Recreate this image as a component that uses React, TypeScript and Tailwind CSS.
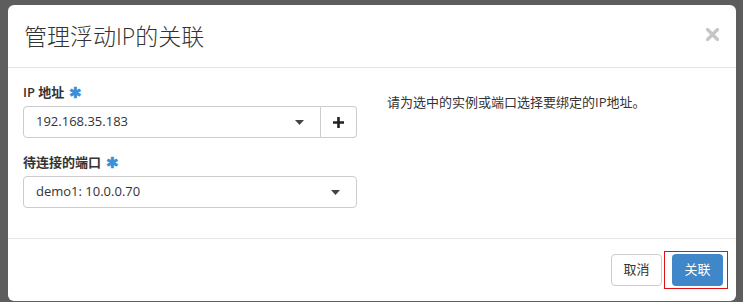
import React from 'react';

const font = { fontFamily: '"Open Sans", "Noto Sans CJK SC", sans-serif' };

const Caret: React.FC = () => (
  <svg width="9" height="5" viewBox="0 0 9 5" className="text-[#444]">
    <path d="M0 0 L9 0 L4.5 5 Z" fill="currentColor" />
  </svg>
);

const Star: React.FC = () => (
  <span className="ml-[5px] text-[#3d8fd6] text-[15px] leading-none align-[-1px]">✱</span>
);

const App: React.FC = () => {
  return (
    <div className="w-[743px] h-[302px] bg-[#5d5d5d] overflow-hidden pt-[5px] pl-[8px]" style={font}>
      <div className="w-[728px] bg-white rounded-[6px] text-[#333]">
        {/* header */}
        <div className="flex items-start justify-between h-[63px] px-[16px] pt-[15px] border-b border-[#e5e5e5]">
          <h4 className="text-[23px] leading-[32px] text-[#333] font-light">管理浮动IP的关联</h4>
          <svg width="13" height="13" viewBox="0 0 13 13" className="mt-[8px] mr-[1px]">
            <path d="M1.5 1.5 L11.5 11.5 M11.5 1.5 L1.5 11.5" stroke="#c6c6c6" strokeWidth="3.2" strokeLinecap="round" />
          </svg>
        </div>

        {/* body */}
        <div className="px-[15px] pt-[15px] pb-[15px] flex">
          <div className="w-[334px]">
            <label className="block text-[13px] leading-[18px] font-semibold text-[#333] mb-[5px]">
              IP 地址<Star />
            </label>
            <div className="flex h-[32px]">
              <div className="flex-1 flex items-center justify-between border border-[#ccc] rounded-l-[4px] pl-[12px] pr-[16px] text-[13px]">
                <span>192.168.35.183</span>
                <Caret />
              </div>
              <div className="w-[36px] flex items-center justify-center border border-l-0 border-[#ccc] rounded-r-[4px]">
                <svg width="11" height="11" viewBox="0 0 11 11">
                  <path d="M4.2 0h2.6v4.2H11v2.6H6.8V11H4.2V6.8H0V4.2h4.2z" fill="#222" />
                </svg>
              </div>
            </div>
            <label className="block text-[13px] leading-[18px] font-semibold text-[#333] mt-[15px] mb-[5px]">
              待连接的端口<Star />
            </label>
            <div className="h-[32px] flex items-center justify-between border border-[#ccc] rounded-[4px] pl-[12px] pr-[16px] text-[13px]">
              <span>demo1: 10.0.0.70</span>
              <Caret />
            </div>
          </div>
          <div className="ml-[30px] pt-[9px] text-[13px] leading-[20px] text-[#333]">
            请为选中的实例或端口选择要绑定的IP地址。
          </div>
        </div>

        {/* footer */}
        <div className="border-t border-[#e5e5e5] mt-[15px] pt-[12px] pb-[12px] pr-[8px] flex justify-end items-center">
          <button className="w-[51px] h-[32px] border border-[#ccc] rounded-[4px] bg-white text-[13px] text-[#333] mr-[2px]">
            取消
          </button>
          <span className="border border-[#e0101a] pl-[7px] pr-[4px] py-[2px] flex">
            <button className="w-[51px] h-[32px] rounded-[4px] bg-[#3f87c9] text-[13px] text-white">
              关联
            </button>
          </span>
        </div>
      </div>
    </div>
  );
};

export default App;
